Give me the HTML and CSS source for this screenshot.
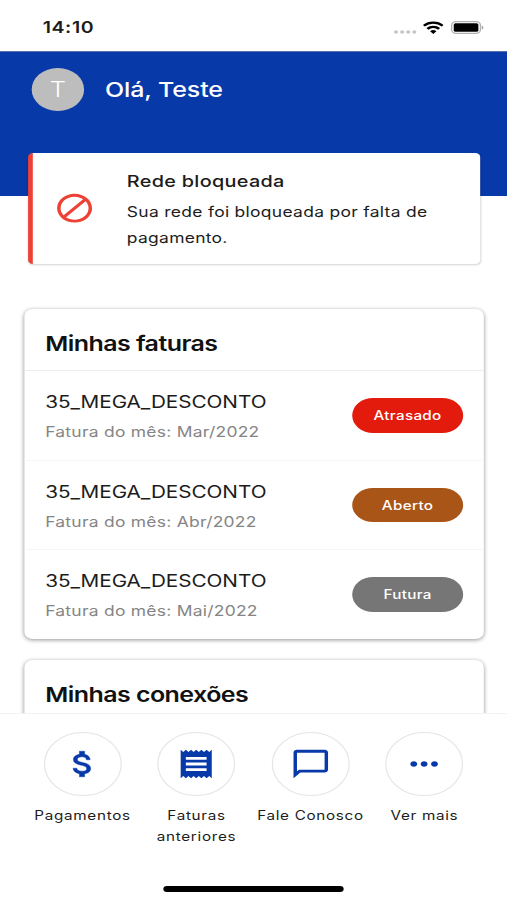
FILE: index.html
```html
<!DOCTYPE html>
<html lang="pt-BR">
<head>
<meta charset="utf-8">
<title>Minhas faturas</title>
<link rel="stylesheet" href="styles.css">
</head>
<body>
<div class="app">
  <div class="status">
    <span class="time">14:10</span>
    <div class="indicators">
      <svg class="signal" viewBox="0 0 19 4"><g fill="#c6c6c6"><circle cx="2" cy="2" r="1.7"/><circle cx="7" cy="2" r="1.7"/><circle cx="12" cy="2" r="1.7"/><circle cx="17" cy="2" r="1.7"/></g></svg>
      <svg class="wifi" viewBox="0 0 17 13"><g fill="none" stroke="#000" stroke-width="2.3"><path d="M.8 4.7a11 11 0 0 1 15.4 0"/><path d="M3.7 7.9a6.8 6.8 0 0 1 9.6 0"/></g><path d="M5.9 10.3a3.8 3.8 0 0 1 5.2 0L8.5 13z"/></svg>
      <svg class="battery" viewBox="0 0 27 13"><rect x=".6" y=".6" width="23.6" height="11.8" rx="3.6" fill="none" stroke="#b0b0b0" stroke-width="1.1"/><rect x="2.3" y="2.2" width="20.2" height="8.6" rx="1.5"/><path d="M25.4 4.4c1.6.8 1.6 3.4 0 4.2z" fill="#999"/></svg>
    </div>
  </div>
  <header class="header">
    <div class="avatar">T</div>
    <span class="hello">Olá, Teste</span>
  </header>
  <main class="content">
    <section class="alert">
      <svg class="block-icon" viewBox="0 0 24 24"><path fill="#ee4136" d="M12 2C6.48 2 2 6.48 2 12s4.48 10 10 10 10-4.48 10-10S17.52 2 12 2zM4 12c0-4.42 3.58-8 8-8 1.85 0 3.55.63 4.9 1.69L5.69 16.9C4.63 15.55 4 13.85 4 12zm8 8c-1.85 0-3.55-.63-4.9-1.69L18.31 7.1C19.37 8.45 20 10.15 20 12c0 4.42-3.58 8-8 8z"/></svg>
      <div>
        <h2 class="alert-title">Rede bloqueada</h2>
        <p class="alert-text">Sua rede foi bloqueada por falta de pagamento.</p>
      </div>
    </section>
    <section class="card">
      <h2 class="card-title">Minhas faturas</h2>
      <div class="row">
        <div><div class="plan">35_MEGA_DESCONTO</div><div class="month">Fatura do mês: Mar/2022</div></div>
        <span class="pill late">Atrasado</span>
      </div>
      <div class="row">
        <div><div class="plan">35_MEGA_DESCONTO</div><div class="month">Fatura do mês: Abr/2022</div></div>
        <span class="pill open">Aberto</span>
      </div>
      <div class="row">
        <div><div class="plan">35_MEGA_DESCONTO</div><div class="month">Fatura do mês: Mai/2022</div></div>
        <span class="pill future">Futura</span>
      </div>
    </section>
    <section class="card connections">
      <h2 class="card-title">Minhas conexões</h2>
    </section>
  </main>
  <nav class="nav">
    <div class="items">
      <div class="item">
        <div class="circle"><svg viewBox="0 0 24 24"><path stroke="#0839a9" stroke-width=".3" d="M11.8 10.9c-2.27-.59-3-1.2-3-2.15 0-1.09 1.01-1.85 2.7-1.85 1.78 0 2.44.85 2.5 2.1h2.21c-.07-1.72-1.12-3.3-3.21-3.81V3h-3v2.16c-1.94.42-3.5 1.68-3.5 3.61 0 2.31 1.91 3.46 4.7 4.13 2.5.6 3 1.48 3 2.41 0 .69-.49 1.79-2.7 1.79-2.06 0-2.87-.92-2.98-2.1h-2.2c.12 2.19 1.76 3.42 3.68 3.83V21h3v-2.15c1.95-.37 3.5-1.5 3.5-3.55 0-2.84-2.43-3.81-4.7-4.4z"/></svg></div>
        <span class="label">Pagamentos</span>
      </div>
      <div class="item">
        <div class="circle"><svg viewBox="0 0 24 24"><path d="M18 17H6v-2h12v2zm0-4H6v-2h12v2zm0-4H6V7h12v2zM3 22l1.5-1.5L6 22l1.5-1.5L9 22l1.500-1.500L12 22l1.500-1.500L15 22l1.500-1.500L18 22l1.500-1.500L21 22V2l-1.500 1.500L18 2l-1.500 1.500L15 2l-1.500 1.500L12 2l-1.500 1.500L9 2 7.500 3.500 6 2 4.500 3.500 3 2v20z"/></svg></div>
        <span class="label">Faturas<br>anteriores</span>
      </div>
      <div class="item">
        <div class="circle"><svg viewBox="0 0 24 24"><path d="M20 2H4c-1.100 0-2 .9-2 2v18l4-4h14c1.100 0 2-.9 2-2V4c0-1.100-.9-2-2-2zm0 14H5.200L4 17.200V4h16v12z"/></svg></div>
        <span class="label">Fale Conosco</span>
      </div>
      <div class="item">
        <div class="circle"><svg viewBox="0 0 24 24"><path d="M6 10c-1.100 0-2 .9-2 2s.9 2 2 2 2-.9 2-2-.9-2-2-2zm12 0c-1.100 0-2 .9-2 2s.9 2 2 2 2-.9 2-2-.9-2-2-2zm-6 0c-1.100 0-2 .9-2 2s.9 2 2 2 2-.9 2-2-.9-2-2-2z"/></svg></div>
        <span class="label">Ver mais</span>
      </div>
    </div>
    <div class="home"></div>
  </nav>
</div>
</body>
</html>
```
FILE: styles.css
```css
* { box-sizing: border-box; margin: 0; padding: 0; }
html, body { width: 507px; height: 900px; overflow: hidden; background: #fff; }
body { font-family: Inter, "Liberation Sans", sans-serif; color: #1c1c1c; }
svg { display: block; flex: none; }

/* The 416px layout is stretched to the full 507px window width. */
.app {
  width: 416px; height: 900px; display: flex; flex-direction: column;
  transform: scaleX(1.21875); transform-origin: 0 0; background: #fff;
}

.status {
  height: 51px; flex: none; padding: 3px 19.500px 0 35px;
  display: flex; align-items: center; justify-content: space-between;
}
.time { font-size: 16px; font-weight: 600; line-height: 20px; letter-spacing: .5px; }
.indicators { display: flex; align-items: center; gap: 5px; }
.signal { width: 19px; height: 4px; margin-top: 9px; }
.wifi { width: 17px; height: 13px; }
.battery { width: 27px; height: 13px; margin-left: 1px; }

.header {
  height: 145px; flex: none; background: #0839a9; border-top: 1px solid #5a72ad;
  padding: 16px 26.300px 0; display: flex; align-items: flex-start; gap: 17.300px;
}
.avatar {
  width: 42.600px; height: 43px; border-radius: 50%; background: #bdbdbd; color: #fff;
  font-size: 21px; font-weight: 300; line-height: 43px; text-align: center;
}
.hello { color: #fff; font-size: 20.500px; font-weight: 500; line-height: 43px; letter-spacing: -.1px; }

.content { height: 560px; flex: none; margin-top: -43px; padding: 0 18.900px 0 19.700px; overflow: hidden; position: relative; }
.alert {
  height: 111px; margin: 0 3.600px 0 3.300px; background: #fff; border-left: 4px solid #ee4136;
  border-radius: 4px; box-shadow: 0 1px 2px rgba(0,0,0,.18);
  display: flex; padding: 14.500px 20px 0 17.300px; gap: 25.400px;
}
.block-icon { width: 34.400px; height: 34.400px; margin-top: 23.500px; }
.alert-title { font-size: 16.300px; font-weight: 500; line-height: 27px; letter-spacing: .25px; }
.alert-text { font-size: 14.300px; line-height: 25.600px; margin-top: 4.500px; letter-spacing: .25px; }

.card {
  margin-top: 44.500px; background: #fff; border-radius: 7px;
  box-shadow: 0 1px 4px rgba(0,0,0,.42);
}
.card-title { height: 61.500px; line-height: 69px; padding-left: 17.400px; font-size: 20.500px; font-weight: 600; color: #111; letter-spacing: -.45px; }
.row {
  height: 89.500px; border-top: 1px solid #ededed; padding: 17px 17.200px 0 17.400px;
  display: flex; justify-content: space-between;
}
.row + .row { border-top-color: #f6f6f6; }
.plan { font-size: 17px; line-height: 28px; letter-spacing: -.04px; }
.month { font-size: 14.300px; line-height: 32.500px; color: #858585; letter-spacing: .22px; }
.pill {
  width: 91px; height: 34.500px; margin-top: 10px; border-radius: 17.250px;
  color: #fff; font-size: 12.500px; font-weight: 500; line-height: 35.500px; text-align: center; letter-spacing: .25px;
}
.late { background: #e21b0c; }
.open { background: #aa5518; }
.future { background: #767676; }
.connections { margin-top: 21px; height: 160px; }

.nav { flex: 1; border-top: 1px solid #f3f3f3; background: #fff; position: relative; display: flex; flex-direction: column; align-items: center; }
.items { height: 172px; padding-top: 17.500px; display: flex; }
.item { width: 93.500px; display: flex; flex-direction: column; align-items: center; }
.circle {
  width: 64px; height: 64px; border: 1px solid #e5e5e5; border-radius: 50%;
  display: flex; align-items: center; justify-content: center;
}
.circle svg { width: 34px; height: 34px; fill: #0839a9; }
.label { margin-top: 9px; font-size: 12.500px; line-height: 21px; letter-spacing: .57px; text-align: center; white-space: nowrap; }
.home { width: 147.700px; height: 5.500px; border-radius: 3px; background: #000; }
```
